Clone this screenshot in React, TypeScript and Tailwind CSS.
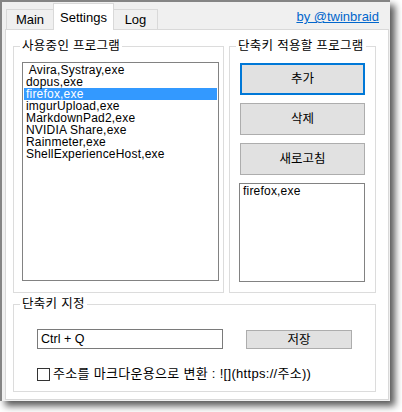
export default function App() {
  const items = [
    " Avira,Systray,exe",
    "dopus,exe",
    "firefox,exe",
    "imgurUpload,exe",
    "MarkdownPad2,exe",
    "NVIDIA Share,exe",
    "Rainmeter,exe",
    "ShellExperienceHost,exe",
  ];
  return (
    <div className="w-[402px] h-[412px] bg-white overflow-hidden font-['Liberation_Sans','Noto_Sans_CJK_KR',sans-serif] text-black">
      <div className="w-[390px] h-[401px] bg-[#f0f0f0] border-l-2 border-t-2 border-[#858585] shadow-[5px_5px_7px_rgba(0,0,0,0.65)] flex flex-col">
        <div className="h-[27px] flex items-end pl-[4px] shrink-0">
          <div className="w-[48px] h-[20px] border border-b-0 border-[#d9d9d9] bg-[#f0f0f0] flex items-center justify-center text-[13px] leading-[15px]">
            Main
          </div>
          <div className="relative z-10 -ml-px -mb-px w-[61px] h-[27px] border border-b-0 border-[#d9d9d9] bg-white flex justify-center pt-[6px] text-[13px] leading-[15px]">
            Settings
          </div>
          <div className="-ml-px w-[45px] h-[20px] border border-b-0 border-[#d9d9d9] bg-[#f0f0f0] flex items-center justify-center text-[13px] leading-[15px]">
            Log
          </div>
          <a className="ml-auto self-start mt-[7px] mr-[11px] text-[13px] leading-[15px] text-[#0066cc] underline">
            by @twinbraid
          </a>
        </div>
        <div className="ml-[3px] w-[384px] h-[371px] border border-[#d9d9d9] bg-white flex flex-col">
          <div className="flex pl-[7px] pt-[16px] gap-[5px]">
            <div className="relative w-[211px] h-[247px] border border-[#dcdcdc] pl-[8px] pt-[15px]">
              <span className="absolute left-[6px] -top-[8px] px-[2px] bg-white text-[12.5px] leading-[14px] tracking-[0.3px] whitespace-nowrap">
                사용중인 프로그램
              </span>
              <div className="w-[197px] h-[219px] border border-[#828282] py-px">
                {items.map((it) => (
                  <div
                    key={it}
                    className={
                      it === "firefox,exe"
                        ? "mx-px h-[12px] pl-[2px] text-[12px] leading-[12px] tracking-[0.2px] whitespace-pre bg-[#3399ff] text-white"
                        : "mx-px h-[12px] pl-[2px] text-[12px] leading-[12px] tracking-[0.2px] whitespace-pre"
                    }
                  >
                    {it}
                  </div>
                ))}
              </div>
            </div>
            <div className="relative w-[147px] h-[247px] border border-[#dcdcdc] pl-[10px] pt-[16px] flex flex-col gap-[8px]">
              <span className="absolute left-[6px] -top-[8px] px-[2px] bg-white text-[12.5px] leading-[14px] tracking-[0.3px] whitespace-nowrap">
                단축키 적용할 프로그램
              </span>
              <button className="w-[125px] h-[32px] bg-[#e1e1e1] border-2 border-[#0078d7] text-[12.5px] leading-[14px]">
                추가
              </button>
              <button className="w-[125px] h-[32px] bg-[#e1e1e1] border border-[#adadad] text-[12.5px] leading-[14px]">
                삭제
              </button>
              <button className="w-[125px] h-[32px] bg-[#e1e1e1] border border-[#adadad] text-[12.5px] leading-[14px]">
                새로고침
              </button>
              <div className="w-[126px] -ml-px h-[99px] border border-[#828282] py-px">
                <div className="mx-px h-[12px] pl-[2px] text-[12px] leading-[12px] tracking-[0.2px]">firefox,exe</div>
              </div>
            </div>
          </div>
          <div className="relative ml-[7px] mt-[11px] w-[363px] h-[88px] border border-[#dcdcdc] pl-[23px] pt-[24px]">
            <span className="absolute left-[6px] -top-[8px] px-[2px] bg-white text-[12.5px] leading-[14px] tracking-[0.3px] whitespace-nowrap">
              단축키 지정
            </span>
            <div className="flex items-start">
              <div className="w-[186px] h-[20px] border border-[#7a7a7a] pl-[3px] text-[12.5px] leading-[18px]">
                Ctrl + Q
              </div>
              <button className="ml-[23px] mt-px w-[106px] h-[19px] bg-[#e1e1e1] border border-[#adadad] text-[12.5px] leading-[14px]">
                저장
              </button>
            </div>
            <div className="mt-[18px] flex items-center gap-[3px]">
              <div className="w-[13px] h-[13px] border border-[#333333] bg-white shrink-0" />
              <span className="text-[13px] leading-[14px] tracking-[0.3px] whitespace-nowrap">
                주소를 마크다운용으로 변환 : ![](https://주소))
              </span>
            </div>
          </div>
        </div>
      </div>
    </div>
  );
}
